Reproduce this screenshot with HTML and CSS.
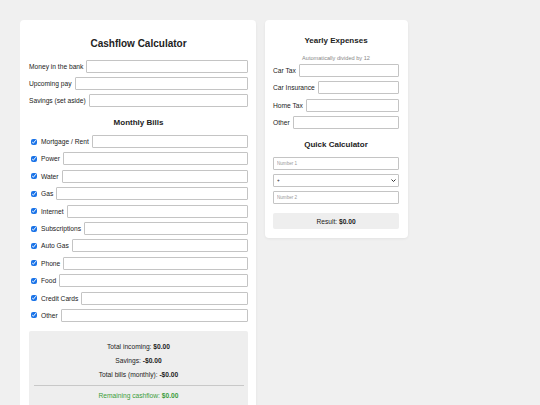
FILE: index.html
```html
<!DOCTYPE html>
<html lang="en">
<head>
    <meta charset="UTF-8">
    <title>Cashflow Calculator</title>
    <link rel="stylesheet" href="styles.css">
</head>
<body>
    <div class="layout">
        <div class="card main">
            <h2>Cashflow Calculator</h2>
            <div class="row"><label for="bank">Money in the bank</label><input type="number" id="bank"></div>
            <div class="row"><label for="pay">Upcoming pay</label><input type="number" id="pay"></div>
            <div class="row"><label for="savings">Savings (set aside)</label><input type="number" id="savings"></div>

            <h3>Monthly Bills</h3>
            <div class="bills">
                <div class="row"><input type="checkbox" checked><label>Mortgage / Rent</label><input type="number" class="bill"></div>
                <div class="row"><input type="checkbox" checked><label>Power</label><input type="number" class="bill"></div>
                <div class="row"><input type="checkbox" checked><label>Water</label><input type="number" class="bill"></div>
                <div class="row"><input type="checkbox" checked><label>Gas</label><input type="number" class="bill"></div>
                <div class="row"><input type="checkbox" checked><label>Internet</label><input type="number" class="bill"></div>
                <div class="row"><input type="checkbox" checked><label>Subscriptions</label><input type="number" class="bill"></div>
                <div class="row"><input type="checkbox" checked><label>Auto Gas</label><input type="number" class="bill"></div>
                <div class="row"><input type="checkbox" checked><label>Phone</label><input type="number" class="bill"></div>
                <div class="row"><input type="checkbox" checked><label>Food</label><input type="number" class="bill"></div>
                <div class="row"><input type="checkbox" checked><label>Credit Cards</label><input type="number" class="bill"></div>
                <div class="row"><input type="checkbox" checked><label>Other</label><input type="number" class="bill"></div>
            </div>

            <div class="summary">
                <p>Total incoming: <b id="incoming">$0.00</b></p>
                <p>Savings: <b id="saved">-$0.00</b></p>
                <p>Total bills (monthly): <b id="bills">-$0.00</b></p>
                <hr>
                <p class="remaining">Remaining cashflow: <b id="remaining">$0.00</b></p>
            </div>
        </div>

        <div class="card side">
            <h3 class="first">Yearly Expenses</h3>
            <p class="note">Automatically divided by 12</p>
            <div class="row"><label>Car Tax</label><input type="number" class="yearly"></div>
            <div class="row"><label>Car Insurance</label><input type="number" class="yearly"></div>
            <div class="row"><label>Home Tax</label><input type="number" class="yearly"></div>
            <div class="row"><label>Other</label><input type="number" class="yearly"></div>

            <h3>Quick Calculator</h3>
            <div class="row"><input type="number" class="small" id="num1" placeholder="Number 1"></div>
            <div class="row select-wrap">
                <select id="op" class="small">
                    <option>+</option>
                    <option>-</option>
                    <option>×</option>
                    <option>÷</option>
                </select>
                <svg class="chevron" width="5" height="3" viewBox="0 0 10 6"><path d="M1 1l4 4 4-4" fill="none" stroke="#333" stroke-width="2"/></svg>
            </div>
            <div class="row"><input type="number" class="small" id="num2" placeholder="Number 2"></div>
            <div class="result">Result: <b id="result">$0.00</b></div>
        </div>
    </div>
</body>
</html>
```

FILE: styles.css
```css
body {
    font-family: "Liberation Sans", Arial, sans-serif;
    font-size: 6.67px;
    color: #222;
    margin: 20px;
    background: #f0f0f0;
}
.layout {
    display: flex;
    align-items: flex-start;
    gap: 9px;
}
.card {
    background: #fff;
    padding: 8px 8px 9px 9px;
    border-radius: 4px;
    box-shadow: 0 1px 3px rgba(0,0,0,0.06);
}
.main {
    width: 219px;
}
.side {
    width: 126px;
    padding: 8px 9px 9px 8px;
}
h2 {
    font-size: 10px;
    text-align: center;
    margin: 10px 0 10.5px 0;
}
h3 {
    font-size: 8px;
    text-align: center;
    margin: 10.4px 0 8.4px 0;
}
h3.first {
    margin: 7.5px 0 10.5px 0;
}
.note {
    font-size: 5.6px;
    color: #888;
    text-align: center;
    margin: 0 0 3px 0;
}
.row {
    display: flex;
    align-items: center;
    margin-bottom: 4.4px;
}
.row label {
    margin-right: 3px;
    white-space: nowrap;
}
input[type="number"], select {
    flex: 1;
    min-width: 0;
    height: 13px;
    box-sizing: border-box;
    border: 1px solid #c4c4c4;
    border-radius: 1px;
    font-family: inherit;
    font-size: 4.6px;
    padding: 0 3px;
}
input::placeholder {
    color: #999;
}
input[type="checkbox"] {
    width: 6px;
    height: 6px;
    margin: 0 4px 0 2px;
    accent-color: #1a73e8;
}
.small {
    height: 12.5px;
}
select {
    appearance: none;
    color: #222;
    background: #fff;
    padding: 0 3px;
}
.select-wrap {
    position: relative;
}
.chevron {
    position: absolute;
    right: 3px;
    top: 5px;
}
.summary {
    background: #eee;
    margin-top: 9.5px;
    padding: 4.75px 4.5px 4px 4.5px;
    text-align: center;
    border-radius: 2px;
}
.summary p {
    margin: 6.5px 0;
    line-height: 7.5px;
}
.summary p:first-child {
    margin-top: 6.5px;
}
.summary hr {
    border: none;
    border-top: 1px solid #c8c8c8;
    margin: 1px 0 0 0;
}
.remaining {
    color: #3a9d3a;
}
.result {
    background: #eee;
    text-align: center;
    margin-top: 9px;
    padding: 4.6px 0;
    border-radius: 2px;
}
```
